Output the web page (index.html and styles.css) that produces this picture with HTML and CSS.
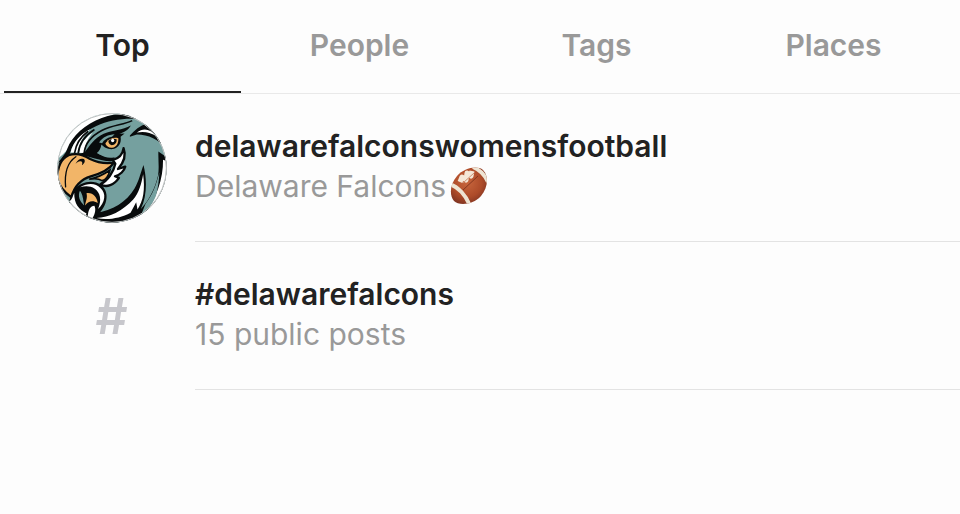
FILE: index.html
```html
<!DOCTYPE html>
<html lang="en">
<head>
<meta charset="UTF-8" />
<meta name="viewport" content="width=device-width, initial-scale=1" />
<title>Search</title>
<link rel="stylesheet" href="styles.css">
</head>
<body>
<nav class="tabs" aria-label="Search categories">
  <a class="tab active" href="#top" aria-current="page">Top</a>
  <a class="tab" href="#people">People</a>
  <a class="tab" href="#tags">Tags</a>
  <a class="tab" href="#places">Places</a>
</nav>

<main class="results">
  <a class="result" href="#delawarefalconswomensfootball">
    <span class="thumb">
      <svg class="avatar" viewBox="13 12 332 332" aria-hidden="true">
        <defs>
          <clipPath id="round"><circle cx="179" cy="178" r="165"/></clipPath>
        </defs>
        <g clip-path="url(#round)">
          <rect x="13" y="12" width="332" height="332" fill="#75a09f"/>
          <!-- crown outline -->
          <path fill="#fff" d="M0 0H245C180 15 120 35 88 65C60 92 55 120 18 148L0 170Z"/>
          <path fill="#080b0c" d="M14 166C24 150 38 138 44 120C58 82 99 44 148 27C185 14 220 10 252 17L272 31C220 26 172 32 132 51C90 70 61 98 52 134L24 158Z"/>
          <!-- forehead streaks -->
          <path fill="#fff" d="M54 131C62 99 83 76 113 61C91 83 79 105 75 131ZM80 132C84 105 98 86 121 71C105 91 96 110 94 133Z"/>
          <path fill="none" stroke="#080b0c" stroke-width="5" d="M66 133C70 106 83 85 107 67M77 134C80 107 94 82 126 62M95 134C97 107 116 82 148 65C180 48 214 48 240 35"/>
          <!-- brow and eye socket -->
          <path fill="#080b0c" d="M70 137L96 131C111 113 126 87 154 75C182 63 210 65 236 50C229 63 215 71 201 75L217 74L205 84C208 103 199 118 182 121C167 123 153 114 147 107C146 119 139 128 133 133C151 144 173 144 190 139L181 157C146 160 112 140 70 137Z"/>
          <path fill="#75a09f" d="M140 101C151 84 168 77 187 76L179 84C166 86 155 93 149 103ZM150 125C168 134 190 130 207 116C209 130 200 142 184 146C170 150 152 144 140 136Z"/>
          <path fill="#f2b568" d="M161 101C171 89 184 85 198 88C199 103 193 115 179 117C169 118 162 111 159 105Z"/>
          <path fill="#080b0c" d="M168 96C175 89 185 88 193 91C194 102 187 109 178 109C171 108 168 102 168 96Z"/>
          <circle cx="181" cy="95" r="5" fill="#fff"/>
          <!-- cheek -->
          <path fill="#fff" stroke="#080b0c" stroke-width="7" stroke-linejoin="round" d="M214 118C211 138 201 149 181 154L189 165C184 190 166 216 144 227C162 239 186 229 200 208L188 203C204 199 216 186 219 174L197 181C216 160 222 139 214 118Z"/>
          <!-- beak -->
          <path fill="#f2b568" stroke="#080b0c" stroke-width="7" stroke-linejoin="round" d="M14 210C14 174 27 149 48 139C76 131 95 139 113 151C137 163 162 165 185 162C168 187 142 196 115 203C85 212 66 231 56 266C35 251 20 235 14 210Z"/>
          <path fill="none" stroke="#080b0c" stroke-width="4" stroke-linecap="round" d="M70 144C47 159 35 190 39 235"/>
          <path fill="#080b0c" d="M69 165C75 153 85 147 94 151C99 155 98 163 88 170C91 162 89 158 84 158C78 157 75 162 69 165Z"/>
          <path fill="#f2b568" stroke="#080b0c" stroke-width="5" d="M110 212C135 207 154 198 173 184C169 202 159 216 149 216C138 209 126 209 110 212Z"/>
          <!-- lower beak and throat -->
          <path fill="#080b0c" d="M66 242C85 219 121 211 146 229C172 249 167 290 136 319L123 344H85L48 286C52 268 58 253 66 242Z"/>
          <path fill="#fff" d="M83 236C107 222 130 224 144 238C163 255 158 281 137 302C149 273 143 253 127 241C114 232 99 232 83 236ZM51 278C57 276 61 263 65 253C65 287 78 303 102 315L97 330L55 301Z"/>
          <path fill="#75a09f" d="M82 247C91 257 92 274 95 291C82 280 75 263 82 247Z"/>
          <path fill="#f2b568" d="M98 291C99 277 106 270 102 254C121 251 134 266 136 284C121 275 109 277 98 291Z"/>
          <path fill="#fff" d="M106 324C106 306 114 292 126 292C131 303 128 316 120 330Z"/>
          <!-- lower neck feathers -->
          <path fill="#080b0c" d="M130 314C180 307 223 281 247 240C261 216 265 193 274 169C284 208 286 261 266 302C291 276 309 240 318 201C322 176 318 152 319 128L352 151V235L285 330L237 351H130Z"/>
          <path fill="#fff" d="M132 329C170 328 212 307 243 273C260 254 268 225 273 197C279 242 274 277 256 303L252 281L235 313C204 329 166 337 132 329Z"/>
          <path fill="#fff" d="M333 153L345 158V228C330 261 308 292 277 318C312 272 334 211 333 153Z"/>
          <path fill="#75a09f" d="M280 287L267 319C289 304 303 284 312 261C318 239 321 215 322 191C312 231 301 259 280 287Z"/>
          <!-- back of the head -->
          <path fill="#080b0c" d="M233 80C247 64 263 51 285 44L320 75L347 126C321 92 290 77 254 77L233 84Z"/>
          <path fill="#fff" d="M254 71C273 57 292 58 312 81C293 70 275 67 254 71Z"/>
        </g>
        <circle cx="179" cy="178" r="164" fill="none" stroke="#bcbfc0" stroke-width="3"/>
      </svg>
    </span>
    <span class="info">
      <span class="name">delawarefalconswomensfootball</span>
      <span class="detail">Delaware Falcons
        <svg class="football" viewBox="0 0 38 38" role="img" aria-label="American football">
          <defs>
            <radialGradient id="leather" cx="45%" cy="40%" r="65%">
              <stop offset="0" stop-color="#c8663d"/>
              <stop offset=".6" stop-color="#ad4b29"/>
              <stop offset="1" stop-color="#762f20"/>
            </radialGradient>
            <clipPath id="ball"><path d="M4 34C-1 28 0 17 7 9C14 1 27 -2 33 3C39 9 38 21 31 29C23 38 9 39 4 34Z"/></clipPath>
          </defs>
          <g clip-path="url(#ball)">
            <rect width="38" height="38" fill="url(#leather)"/>
            <path d="M0 17C8 20 16 28 20 39M23 0C30 3 35 8 38 15" fill="none" stroke="#eee4d3" stroke-width="4"/>
            <path d="M10 15L12 10L16 13L17 6L21 9L22 4" fill="none" stroke="#f5e7d7" stroke-width="5" stroke-linejoin="round"/>
            <path d="M13 16L24 6" stroke="#c98d70" stroke-width="1"/>
            <path d="M13 23L28 9" stroke="#843720" stroke-width="1"/>
          </g>
        </svg>
      </span>
    </span>
  </a>

  <a class="result" href="#delawarefalcons">
    <span class="thumb hash" aria-hidden="true">#</span>
    <span class="info">
      <span class="name">#delawarefalcons</span>
      <span class="detail">15 public posts</span>
    </span>
  </a>
</main>
</body>
</html>
```

FILE: styles.css
```css
* {
  box-sizing: border-box;
}
body {
  margin: 0;
  background: #fdfdfd;
  color: #222;
  font-family: Inter, 'Helvetica Neue', Arial, sans-serif;
  font-size: 30px;
}
a {
  color: inherit;
  text-decoration: none;
}
.tabs {
  display: grid;
  grid-template-columns: repeat(4, 1fr);
  padding: 0 8px 0 4px;
  border-bottom: 1px solid #e9e9e9;
}
.tab {
  height: 93px;
  padding-top: 25px;
  border-bottom: 2px solid transparent;
  color: #999;
  font-weight: 600;
  line-height: 40px;
  text-align: center;
}
.tab.active {
  color: #222;
  border-bottom-color: #222;
}
.result {
  display: flex;
  align-items: stretch;
}
.thumb {
  display: flex;
  flex: 0 0 195px;
  align-items: center;
  justify-content: center;
  padding-left: 28px;
}
.avatar {
  display: block;
  width: 110px;
  height: 110px;
}
.hash {
  color: #c7c7cc;
  font-size: 50px;
  font-weight: 600;
}
.info {
  display: flex;
  flex: 1;
  flex-direction: column;
  min-width: 0;
  padding: 32px 0 35px;
  border-bottom: 1px solid #e3e3e3;
}
.name {
  font-weight: 600;
  line-height: 40px;
}
.detail {
  display: flex;
  align-items: center;
  gap: 4px;
  color: #999;
  line-height: 40px;
}
.football {
  width: 38px;
  height: 38px;
}
```
